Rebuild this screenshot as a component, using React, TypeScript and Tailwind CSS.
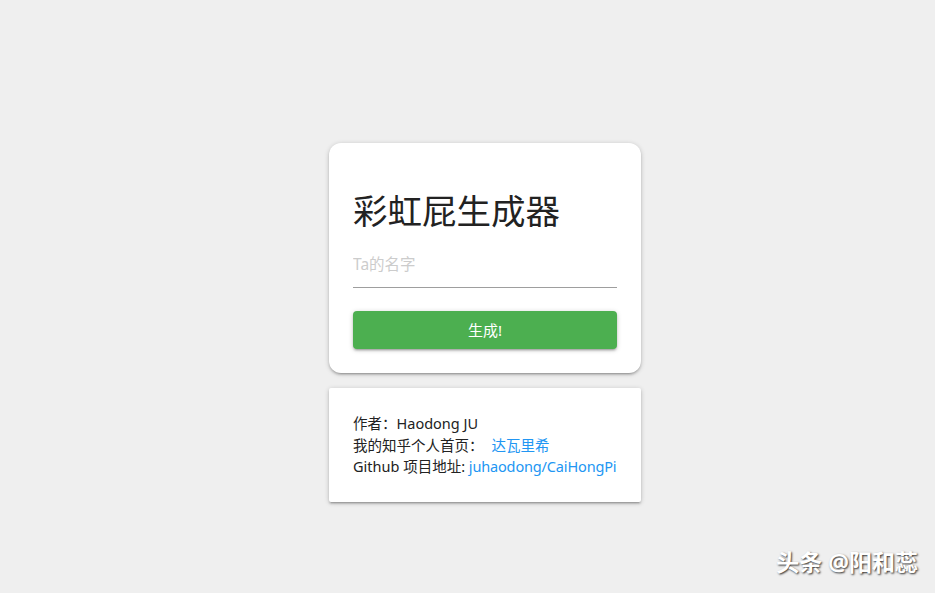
import { useState } from "react"

const cardShadow =
  "shadow-[0_2px_2px_0_rgba(0,0,0,0.14),0_3px_1px_-2px_rgba(0,0,0,0.12),0_1px_5px_0_rgba(0,0,0,0.2)]"

export default function App() {
  const [name, setName] = useState("")

  return (
    <div
      className="relative min-h-[593px] w-full bg-[#efefef] pt-[143px] pl-[329px]"
      style={{ fontFamily: '"Noto Sans", "Noto Sans CJK SC", sans-serif' }}
    >
      {/* Generator card */}
      <div className={`w-[312px] rounded-[12px] bg-white px-6 pt-12 pb-6 ${cardShadow}`}>
        <h3 className="text-[34.5px] leading-[40px] font-normal text-[#222]">彩虹屁生成器</h3>
        <input
          value={name}
          onChange={(e) => setName(e.target.value)}
          placeholder="Ta的名字"
          className="mt-[10px] block h-[47px] w-full border-b border-[#9e9e9e] bg-transparent text-[15.5px] text-[#222] outline-none placeholder:text-[#cccccc]"
        />
        <button
          className={`mt-[23px] block h-[38px] w-full rounded-[4px] bg-[#4caf50] text-[15px] text-white ${cardShadow}`}
        >
          生成!
        </button>
      </div>

      {/* Info card */}
      <div className={`mt-[15px] w-[312px] rounded-[2px] bg-white px-6 pt-[25px] pb-6 text-[14.5px] leading-[21.5px] text-[#222] whitespace-nowrap ${cardShadow}`}>
        <p>作者：Haodong JU</p>
        <p>
          我的知乎个人首页：<a href="#" className="ml-[8px] text-[#2196f3]">达瓦里希</a>
        </p>
        <p>
          Github 项目地址: <a href="#" className="text-[#2196f3] tracking-[-0.15px]">juhaodong/CaiHongPi</a>
        </p>
      </div>

      {/* Watermark */}
      <div className="absolute right-[17px] bottom-[14px] text-[23px] font-bold text-white [text-shadow:1px_1px_2px_rgba(0,0,0,0.8)]">
        头条 @阳和蕊
      </div>
    </div>
  )
}
